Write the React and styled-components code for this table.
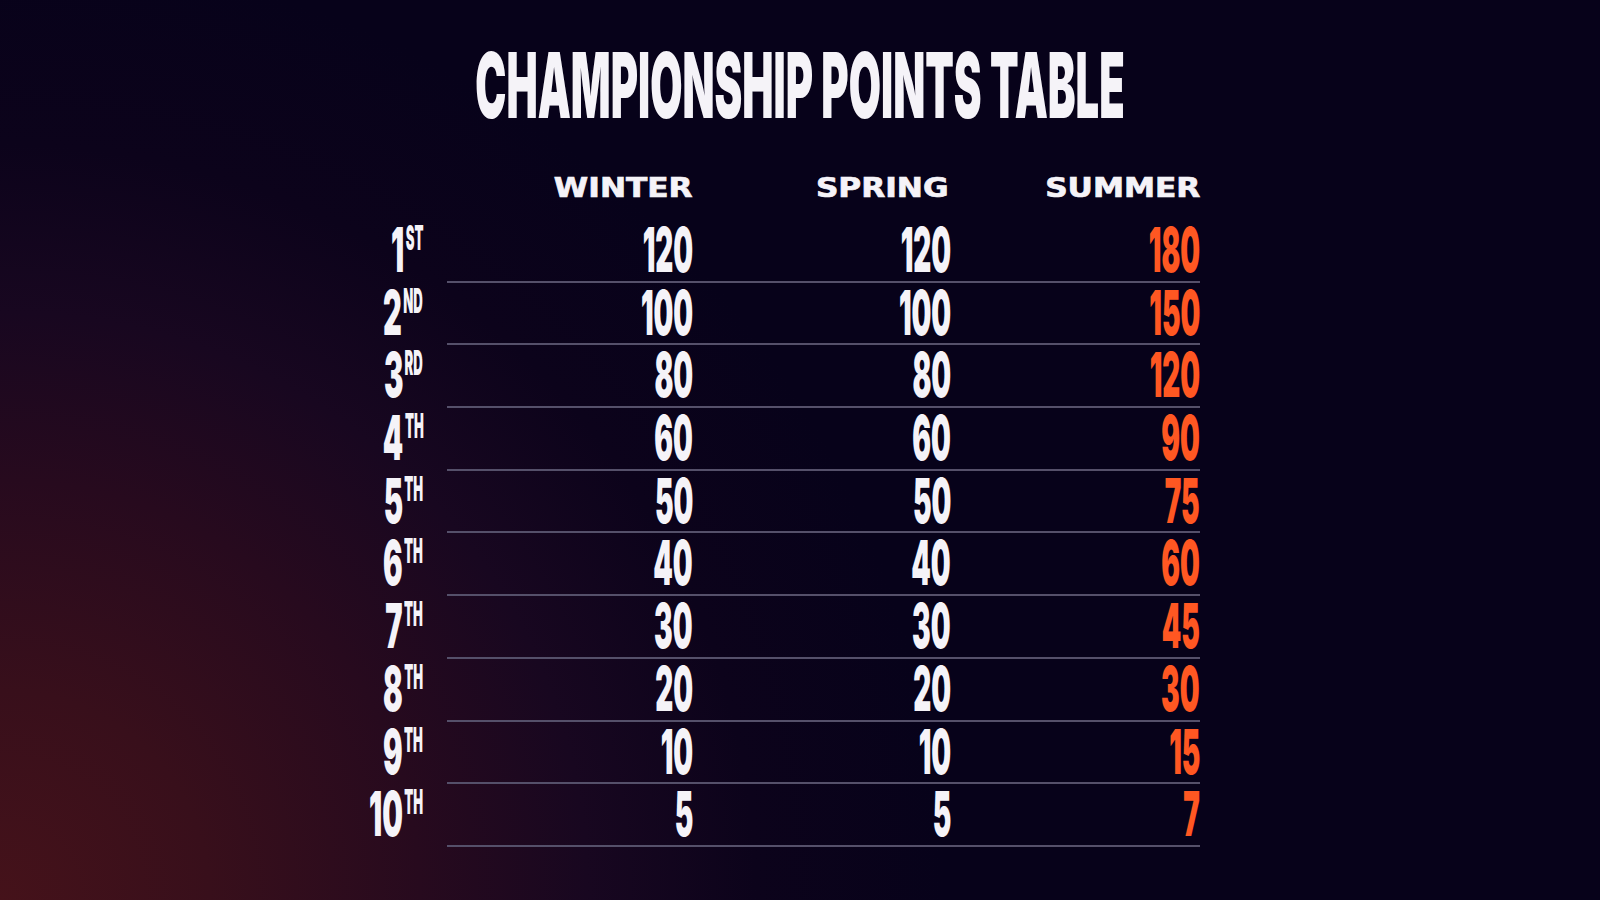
import React from "react";
import styled, { createGlobalStyle } from "styled-components";

const GlobalStyle = createGlobalStyle`
  html, body { margin: 0; padding: 0; }
  body { background: #07021a; }
  * { box-sizing: border-box; }
`;

const Page = styled.div`
  width: 100%;
  min-height: 900px;
  height: 100vh;
  overflow: hidden;
  padding-top: 40px;
  display: flex;
  flex-direction: column;
  align-items: center;
  background:
    radial-gradient(1050px 1050px at 0% 100%,
      #45121a 0%,
      #380f1b 20%,
      #270a1e 40%,
      #180720 56%,
      #0c031b 72%,
      rgba(7, 2, 26, 0) 90%),
    #07021a;
  font-family: "Inter", "Lato", "Liberation Sans", sans-serif;
  color: #f5f3f8;
`;

const Title = styled.h1`
  margin: 0;
  height: 91px;
  font-size: 91px;
  line-height: 91px;
  font-weight: 900;
  white-space: nowrap;
  transform: scaleX(0.458);
  transform-origin: center;
`;

const Table = styled.div`
  width: 912px;
  padding-right: 56px;
  margin-top: 42px;
  display: flex;
  flex-direction: column;
`;

const Row = styled.div`
  display: grid;
  grid-template-columns: 80px 23px 753px;
`;

const HeaderCells = styled.div`
  display: grid;
  grid-template-columns: 246px 256px 251px;
  height: 30px;
  margin-bottom: 17px;
`;

const Cells = styled.div`
  display: grid;
  grid-template-columns: 246px 258px 249px;
  height: 62.7px;
  border-bottom: 2px solid #55506a;
`;

const HeaderCell = styled.div`
  text-align: right;
  font-family: "DejaVu Sans", "Liberation Sans", sans-serif;
  font-weight: 700;
  font-size: 26px;
  line-height: 30px;
  white-space: nowrap;
  color: #f5f3f8;
  -webkit-text-stroke: 0.7px #f5f3f8;
`;

const Wide = styled.span`
  display: inline-block;
  transform: scaleX(1.2);
  transform-origin: right center;
`;

const Cell = styled.div`
  text-align: right;
  font-size: 62px;
  line-height: 60px;
  font-weight: 900;
  white-space: nowrap;
  color: ${(p) => (p.$accent ? "#ff5722" : "#f5f3f8")};
`;

const Narrow = styled.span`
  display: inline-block;
  transform: scaleX(${(p) => p.$k || 0.45});
  transform-origin: right center;
`;

const Label = styled.div`
  display: flex;
  justify-content: flex-end;
  font-size: 62px;
  line-height: 60px;
  font-weight: 900;
  white-space: nowrap;
`;

const Sup = styled.span`
  display: inline-block;
  vertical-align: top;
  padding-top: 1px;
  font-size: 34px;
  line-height: 34px;
  font-weight: 900;
  margin-left: 3px;
  transform: scaleX(0.82);
  transform-origin: left center;
  margin-right: -7px;
`;

const rows = [
  ["1", "ST", 120, 120, 180],
  ["2", "ND", 100, 100, 150],
  ["3", "RD", 80, 80, 120],
  ["4", "TH", 60, 60, 90],
  ["5", "TH", 50, 50, 75],
  ["6", "TH", 40, 40, 60],
  ["7", "TH", 30, 30, 45],
  ["8", "TH", 20, 20, 30],
  ["9", "TH", 10, 10, 15],
  ["10", "TH", 5, 5, 7],
];

export default function App() {
  return (
    <>
      <GlobalStyle />
      <Page>
        <Title>CHAMPIONSHIP POINTS TABLE</Title>
        <Table>
          <Row>
            <div />
            <div />
            <HeaderCells>
              <HeaderCell><Wide>WINTER</Wide></HeaderCell>
              <HeaderCell><Wide>SPRING</Wide></HeaderCell>
              <HeaderCell><Wide>SUMMER</Wide></HeaderCell>
            </HeaderCells>
          </Row>
          {rows.map(([n, suf, w, sp, su]) => (
            <Row key={n}>
              <Label>
                <Narrow $k={0.47}>
                  {n}
                  <Sup>{suf}</Sup>
                </Narrow>
              </Label>
              <div />
              <Cells>
                <Cell><Narrow>{w}</Narrow></Cell>
                <Cell><Narrow>{sp}</Narrow></Cell>
                <Cell $accent><Narrow>{su}</Narrow></Cell>
              </Cells>
            </Row>
          ))}
        </Table>
      </Page>
    </>
  );
}
